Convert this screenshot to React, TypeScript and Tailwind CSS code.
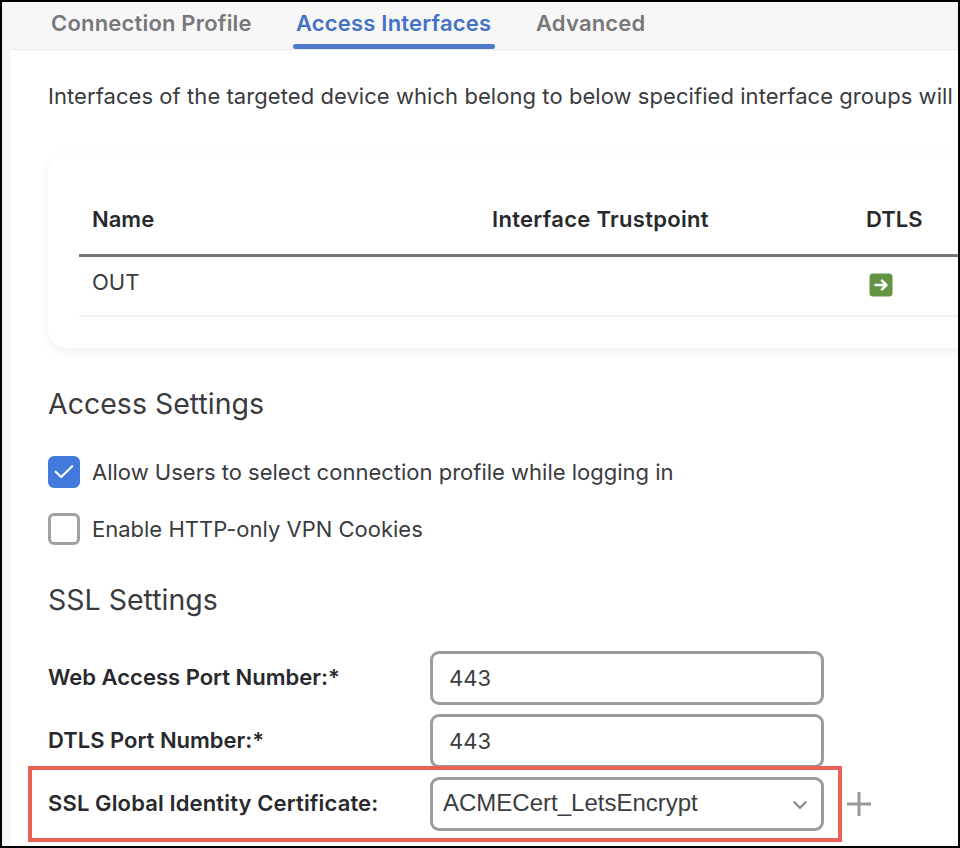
import React from "react";

function Tab({ label, active, className }: { label: string; active?: boolean; className: string }) {
  return (
    <div className={`relative h-full whitespace-nowrap text-[22px] leading-[43px] font-semibold tracking-[0.19px] ${active ? "text-[#4472c4]" : "text-[#77787b]"} ${className}`}>
      {label}
      {active && <div className="absolute -left-[3px] -right-[3px] bottom-0 h-[5px] rounded-full bg-[#4d7acb]" />}
    </div>
  );
}

function Check({ checked }: { checked?: boolean }) {
  return checked ? (
    <span className="flex h-8 w-8 shrink-0 items-center justify-center rounded-[6px] bg-[#4279dc]">
      <svg width="22" height="18" viewBox="0 0 22 18" fill="none" stroke="white" strokeWidth="2.2" strokeLinecap="round" strokeLinejoin="round">
        <path d="M2.6 8.7 L8.2 14 L19.2 3.2" />
      </svg>
    </span>
  ) : (
    <span className="h-8 w-8 shrink-0 rounded-[6px] border-[3px] border-[#a0a1a5] bg-white" />
  );
}

function Field({ label, labelClass, children }: { label: string; labelClass: string; children: React.ReactNode }) {
  return (
    <div className="flex h-[54px] items-center">
      <div className={`mb-[2px] w-[382px] shrink-0 whitespace-nowrap text-[22px] leading-[30px] font-semibold text-[#28292c] ${labelClass}`}>{label}</div>
      <div className="flex h-[54px] w-[394px] shrink-0 items-center rounded-[9px] border-[3px] border-[#9b9ca1] bg-white text-[#3c3d40]">{children}</div>
    </div>
  );
}

export default function App() {
  return (
    <div className="relative h-[848px] w-[960px] overflow-hidden border-2 border-black bg-white font-['Inter','Liberation_Sans',sans-serif] text-[#3a3b3e]">
      <div className="flex h-full">
        <div className="w-[9px] shrink-0 bg-[#f7f7f8]" />
        <div className="flex min-w-0 flex-1 flex-col">
          <nav className="flex h-[48px] shrink-0 border-b border-[#e9e9ea] bg-[#f7f7f8] pl-[40px]">
            <Tab label="Connection Profile" className="w-[245px]" />
            <Tab label="Access Interfaces" active className="w-[196px]" />
            <Tab label="Advanced" className="ml-[44px]" />
          </nav>
          <main className="pl-[37px]">
            <p className="mt-[31px] text-[22px] leading-[30px] whitespace-nowrap tracking-[0.06px]">
              Interfaces of the targeted device which belong to below specified interface groups will
            </p>
            <section className="mt-[42px] h-[195px] w-[940px] rounded-[18px] bg-white pl-[31px] shadow-[0_4px_12px_rgba(0,0,0,0.06)]">
              <div className="flex h-[104px] w-[900px] border-b-[3px] border-[#77777a] pt-[51px] pl-[13px] text-[22px] leading-[30px] font-semibold text-[#28292c]">
                <div className="w-[400px]">Name</div>
                <div className="w-[374px] tracking-[0.3px]">Interface Trustpoint</div>
                <div>DTLS</div>
              </div>
              <div className="flex h-[60px] w-[900px] border-b-2 border-[#f0f0f1] pl-[13px] text-[22px]">
                <div className="w-[777px] pt-[10px] leading-[30px]">OUT</div>
                <svg className="mt-[16px]" width="24" height="24" viewBox="0 0 24 24">
                  <rect x="0.5" y="0.5" width="23" height="23" rx="3.5" fill="#629443" />
                  <path d="M6.5 12 H17 M13 7.6 L17.4 12 L13 16.4" fill="none" stroke="white" strokeWidth="2.5" strokeLinecap="round" strokeLinejoin="round" />
                </svg>
              </div>
            </section>
            <h2 className="mt-[37px] text-[28.5px] leading-[38px]">Access Settings</h2>
            <div className="-ml-[0.5px] mt-[33px] flex h-8 items-center gap-[12.5px] text-[22px] whitespace-nowrap">
              <Check checked />
              <span>Allow Users to select connection profile while logging in</span>
            </div>
            <div className="-ml-[0.5px] mt-[25px] flex h-8 items-center gap-[12.5px] text-[22px] whitespace-nowrap">
              <Check />
              <span>Enable HTTP-only VPN Cookies</span>
            </div>
            <h2 className="mt-[36px] text-[28.5px] leading-[38px]">SSL Settings</h2>
            <div className="mt-[32px] flex flex-col gap-[9px]">
              <Field label="Web Access Port Number:*" labelClass="">
                <span className="pl-[16px] text-[22px]">443</span>
              </Field>
              <Field label="DTLS Port Number:*" labelClass="">
                <span className="pl-[16px] text-[22px]">443</span>
              </Field>
              <div className="flex items-center">
                <Field label="SSL Global Identity Certificate:" labelClass="tracking-[0.13px]">
                  <span className="mb-[2px] flex-1 pl-[10px] font-['Liberation_Sans',Arial,sans-serif] text-[24px]">ACMECert_LetsEncrypt</span>
                  <svg className="mt-[2px] mr-[13px]" width="16" height="12" viewBox="0 0 16 12" fill="none" stroke="#8f9094" strokeWidth="2.4" strokeLinecap="round" strokeLinejoin="round">
                    <path d="M2.4 3.2 L8 8.8 L13.6 3.2" />
                  </svg>
                </Field>
                <svg className="ml-[23px]" width="24" height="24" viewBox="0 0 24 24" stroke="#98989b" strokeWidth="3">
                  <path d="M0 12 H24 M12 0 V24" />
                </svg>
              </div>
            </div>
          </main>
        </div>
      </div>
      <div className="absolute top-[764px] left-[26px] h-[76px] w-[814px] border-4 border-[#ec6056]" />
    </div>
  );
}
